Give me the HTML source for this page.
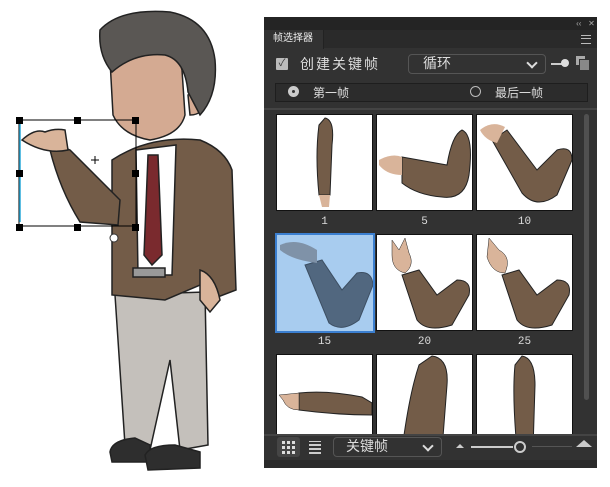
<!DOCTYPE html>
<html><head><meta charset="utf-8"><style>
body{margin:0;width:610px;height:487px;background:#fff;position:relative;overflow:hidden;font-family:"Liberation Sans","Noto Sans CJK SC",sans-serif}
.a{position:absolute}
.cell{position:absolute;width:95px;height:95px;background:#fff;border:1px solid #111;overflow:hidden}
.lbl{position:absolute;width:97px;text-align:center;color:#ddd;font-size:11px;font-family:"Liberation Mono",monospace}
.h{position:absolute;width:7px;height:7px;background:#000}
.chev{position:absolute;width:6px;height:6px;border-right:2px solid #ddd;border-bottom:2px solid #ddd;transform:rotate(45deg)}
</style></head><body>
<svg class="a" style="left:0;top:0" width="260" height="487" viewBox="0 0 260 487">
 <g stroke="#222" stroke-width="1.5">
 <path d="M115 295 L205 292 L208 445 L180 450 L170 360 L150 450 L125 445 Z" fill="#c4c0bb"/>
 <path d="M110 452 Q112 440 135 438 L150 445 L150 462 L112 462 Z" fill="#2e2e2e"/>
 <path d="M145 455 Q150 445 175 445 L200 452 L200 468 L148 470 Z" fill="#2e2e2e"/>
 <path d="M112 160 Q150 135 200 140 Q225 150 232 170 L236 290 L210 300 L200 285 L165 300 L112 295 Z" fill="#735c48"/>
 <path d="M200 270 Q215 275 220 300 L210 312 L200 300 Z" fill="#d9b49a"/>
 <path d="M136 150 L176 145 L172 275 L138 275 Z" fill="#fff"/>
 <path d="M148 155 L158 155 L162 255 L152 265 L144 255 Z" fill="#7a2a2e"/>
 <rect x="133" y="268" width="32" height="9" fill="#999"/>
 <path d="M50 150 Q60 145 70 150 L120 200 L118 225 L80 222 Q60 190 50 150 Z" fill="#735c48"/>
 <path d="M22 140 Q35 128 45 132 Q55 128 65 130 L68 150 Q45 155 22 140 Z" fill="#d9b49a"/>
 <path d="M188 95 Q200 88 205 100 Q204 115 190 115 Z" fill="#d5ab93"/>
 <path d="M110 60 Q112 35 140 38 Q175 40 182 70 L185 115 Q180 135 150 140 Q122 135 113 115 Z" fill="#d4aa92"/>
 <path d="M100 30 Q120 8 170 12 Q210 20 215 60 Q218 95 200 115 L188 92 Q185 60 165 55 Q135 52 112 72 Q98 55 100 30 Z" fill="#5a5754"/>
 </g>
 <rect x="19" y="120" width="117" height="106" fill="none" stroke="#000" stroke-width="1"/>
 <line x1="20" y1="124" x2="20" y2="222" stroke="#29a8d8" stroke-width="1.5"/>
 <line x1="91" y1="160" x2="99" y2="160" stroke="#000"/><line x1="95" y1="156" x2="95" y2="164" stroke="#000"/>
 <circle cx="114" cy="238" r="4" fill="#fff" stroke="#333"/>
</svg>
<div class="h" style="left:16px;top:117px"></div><div class="h" style="left:74px;top:117px"></div><div class="h" style="left:132px;top:117px"></div>
<div class="h" style="left:16px;top:170px"></div><div class="h" style="left:132px;top:170px"></div>
<div class="h" style="left:16px;top:224px"></div><div class="h" style="left:74px;top:224px"></div><div class="h" style="left:132px;top:224px"></div>

<div class="a" style="left:264px;top:17px;width:333px;height:451px;background:#323232"></div>
<div class="a" style="left:264px;top:17px;width:333px;height:13px;background:#242424;color:#aaa;font-size:8px;text-align:right;line-height:13px">‹‹ &nbsp; ✕&nbsp;</div>
<div class="a" style="left:264px;top:30px;width:333px;height:18px;background:#2a2a2a"></div>
<div class="a" style="left:264px;top:30px;width:60px;height:19px;background:#323232;color:#eee;font-size:10px;line-height:18px;padding-left:9px;box-sizing:border-box;border-right:1px solid #222">帧选择器</div>
<div class="a" style="left:581px;top:35px;width:10px;height:7px;border-top:1px solid #bbb;border-bottom:1px solid #bbb"></div>
<div class="a" style="left:581px;top:38px;width:10px;height:1px;background:#bbb"></div>
<div class="a" style="left:276px;top:58px;width:12px;height:12px;background:#bbb;border-radius:1px;color:#333;font-size:10px;line-height:12px;text-align:center">✓</div>
<div class="a" style="left:300px;top:54px;color:#ddd;font-size:14px;letter-spacing:2px">创建关键帧</div>
<div class="a" style="left:408px;top:54px;width:138px;height:20px;border:1px solid #555;border-radius:4px;box-sizing:border-box;color:#ddd;font-size:14px;line-height:17px;padding-left:14px">循环</div>
<div class="chev" style="left:528px;top:59px"></div>
<div class="a" style="left:551px;top:63px;width:12px;height:2px;background:#ccc"></div>
<div class="a" style="left:561px;top:59px;width:8px;height:8px;border-radius:50%;background:#ddd"></div>
<div class="a" style="left:576px;top:56px;width:9px;height:9px;background:#aaa"></div>
<div class="a" style="left:579px;top:59px;width:9px;height:10px;background:#888;border:1px solid #323232"></div>
<div class="a" style="left:275px;top:83px;width:313px;height:19px;border:1px solid #1e1e1e;background:#2c2c2c;box-sizing:border-box"></div>
<div class="a" style="left:288px;top:86px;width:11px;height:11px;border-radius:50%;background:#ccc"></div>
<div class="a" style="left:292px;top:90px;width:3px;height:3px;border-radius:50%;background:#333"></div>
<div class="a" style="left:313px;top:84px;color:#ddd;font-size:12px">第一帧</div>
<div class="a" style="left:470px;top:86px;width:9px;height:9px;border-radius:50%;border:1.5px solid #bbb"></div>
<div class="a" style="left:495px;top:84px;color:#ddd;font-size:12px">最后一帧</div>
<div class="a" style="left:264px;top:108px;width:333px;height:2px;background:#444"></div>

<div class="a" style="left:264px;top:110px;width:333px;height:324px;overflow:hidden">
<div class="cell" style="left:12px;top:4px"><svg width="95" height="95"><path d="M48 3 Q58 5 55 30 L53 80 L42 80 Q38 40 42 10 Z" fill="#735c48" stroke="#222"/><path d="M42 80 L53 80 L52 92 L45 92 Z" fill="#d9b49a"/></svg></div>
<div class="cell" style="left:112px;top:4px"><svg width="95" height="95"><path d="M25 42 L70 50 Q75 20 85 15 Q97 20 92 60 Q88 85 65 82 Q40 80 25 68 Z" fill="#735c48" stroke="#222"/><path d="M2 45 Q15 38 25 42 L25 60 Q10 60 2 50 Z" fill="#d9b49a"/></svg></div>
<div class="cell" style="left:212px;top:4px"><svg width="95" height="95"><path d="M15 25 L30 15 L60 55 L80 35 Q95 30 95 45 L80 80 Q60 95 45 78 Z" fill="#735c48" stroke="#222"/><path d="M3 15 Q15 5 28 12 L20 28 Q8 25 3 15 Z" fill="#d9b49a"/></svg></div>
<div class="lbl" style="left:12px;top:106px">1</div><div class="lbl" style="left:112px;top:106px">5</div><div class="lbl" style="left:212px;top:106px">10</div>
<div class="cell" style="left:11px;top:123px;width:96px;height:96px;background:#a8ccef;border:2px solid #3b7fd0"><svg width="96" height="96"><path d="M28 30 L45 25 L65 55 L80 38 Q95 35 96 50 L82 85 Q65 98 52 88 Z" fill="#51677f" stroke="#3d4f63"/><path d="M3 10 Q20 2 40 15 L40 28 Q15 25 3 15 Z" fill="#7f92a8"/></svg></div>
<div class="cell" style="left:112px;top:124px"><svg width="95" height="95"><path d="M25 40 L42 35 L60 60 L80 45 Q95 45 92 60 L75 90 Q50 98 40 85 Z" fill="#735c48" stroke="#222"/><path d="M15 5 L22 15 L28 3 L32 18 Q38 30 28 38 Q15 35 15 20 Z" fill="#d9b49a" stroke="#222" stroke-width=".5"/></svg></div>
<div class="cell" style="left:212px;top:124px"><svg width="95" height="95"><path d="M25 40 L42 35 L60 60 L80 45 Q95 45 92 60 L75 90 Q50 98 40 85 Z" fill="#735c48" stroke="#222"/><path d="M12 3 L22 15 Q35 22 28 38 Q15 38 10 22 Z" fill="#d9b49a" stroke="#222" stroke-width=".5"/></svg></div>
<div class="lbl" style="left:12px;top:226px">15</div><div class="lbl" style="left:112px;top:226px">20</div><div class="lbl" style="left:212px;top:226px">25</div>
<div class="cell" style="left:12px;top:244px"><svg width="95" height="95"><path d="M22 38 Q50 35 85 42 L95 48 L95 60 Q60 60 22 55 Z" fill="#735c48" stroke="#222"/><path d="M2 40 L22 38 L22 55 Q10 55 6 45 Z" fill="#d9b49a" stroke="#222" stroke-width=".5"/></svg></div>
<div class="cell" style="left:112px;top:244px"><svg width="95" height="95"><path d="M55 1 Q72 3 70 30 L65 95 L25 95 Q32 40 42 10 Z" fill="#735c48" stroke="#222"/></svg></div>
<div class="cell" style="left:212px;top:244px"><svg width="95" height="95"><path d="M45 1 Q58 3 58 30 L56 95 L40 95 Q35 40 38 10 Z" fill="#735c48" stroke="#222"/></svg></div>
<div class="a" style="left:320px;top:4px;width:5px;height:286px;background:#505050;border-radius:3px"></div>
</div>

<div class="a" style="left:264px;top:434px;width:333px;height:2px;background:#444"></div>
<div class="a" style="left:277px;top:437px;width:23px;height:20px;background:#454545;border-radius:3px"></div>
<div class="a" style="left:282px;top:441px;width:13px;height:13px;background:repeating-linear-gradient(90deg,#ddd 0 3px,transparent 3px 5px)"></div>
<div class="a" style="left:282px;top:441px;width:13px;height:13px;background:repeating-linear-gradient(0deg,transparent 0 3px,#454545 3px 5px)"></div>
<div class="a" style="left:309px;top:441px;width:12px;height:13px;background:repeating-linear-gradient(0deg,#ccc 0 2px,transparent 2px 4px)"></div>
<div class="a" style="left:333px;top:437px;width:109px;height:20px;border:1px solid #555;border-radius:4px;box-sizing:border-box;color:#ddd;font-size:14px;line-height:17px;padding-left:12px">关键帧</div>
<div class="chev" style="left:424px;top:442px"></div>
<div class="a" style="left:456px;top:444px;width:0;height:0;border:4px solid transparent;border-bottom-color:#ccc;border-top:0"></div>
<div class="a" style="left:471px;top:446px;width:42px;height:2px;background:#ccc"></div>
<div class="a" style="left:514px;top:441px;width:8px;height:8px;border-radius:50%;border:2px solid #ccc"></div>
<div class="a" style="left:532px;top:446px;width:40px;height:1px;background:#555"></div>
<div class="a" style="left:576px;top:440px;width:0;height:0;border:8px solid transparent;border-bottom:7px solid #ccc;border-top:0"></div>
<div class="a" style="left:264px;top:460px;width:333px;height:8px;background:#2a2a2a"></div>
</body></html>
